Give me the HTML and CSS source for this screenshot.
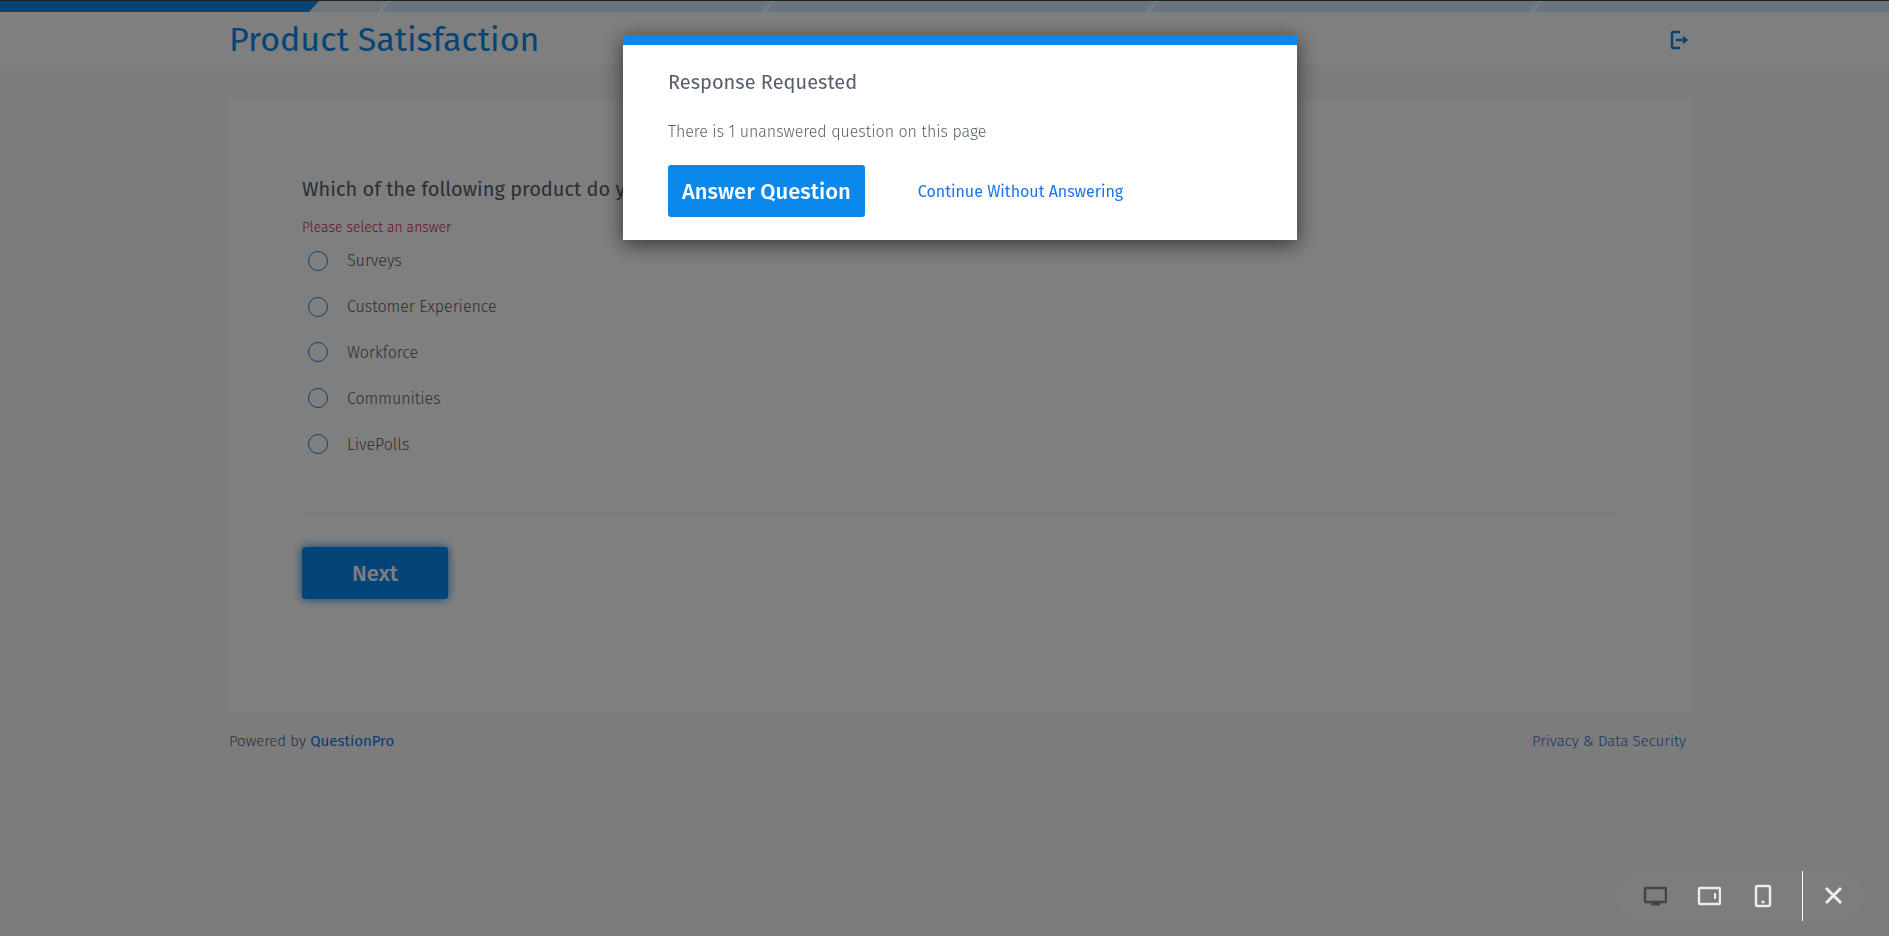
FILE: index.html
```
<!DOCTYPE html>
<html lang="en">
<head>
    <meta charset="UTF-8">
    <meta name="viewport" content="width=device-width, initial-scale=1.0">
    <title>Product Satisfaction</title>
    <link rel="stylesheet" href="styles.css">
</head>
<body>
    <div class="progress">
        <span class="step step-current"><span class="step-fill" style="width: 82%"></span></span>
        <span class="step"></span>
        <span class="step"></span>
        <span class="step"></span>
        <span class="step"></span>
    </div>

    <header class="header">
        <div class="container header-inner">
            <h1>Product Satisfaction</h1>
            <button type="button" class="exit" aria-label="Exit survey">
                <svg width="20" height="20" viewBox="0 0 20 20" fill="none" stroke="currentColor" stroke-width="2.500">
                    <path d="M11 2H4.500Q3 2 3 3.500V16.500Q3 18 4.500 18H11"/>
                    <path d="M7 10H16"/>
                    <path d="M14 5.800L19 10L14 14.200Z" fill="currentColor" stroke="none"/>
                </svg>
            </button>
        </div>
    </header>

    <main class="container">
        <form class="card">
            <h2 id="question">Which of the following product do you use?</h2>
            <p class="error">Please select an answer</p>
            <div class="options" role="radiogroup" aria-labelledby="question">
                <label class="option"><input type="radio" name="product" value="surveys">Surveys</label>
                <label class="option"><input type="radio" name="product" value="cx">Customer Experience</label>
                <label class="option"><input type="radio" name="product" value="workforce">Workforce</label>
                <label class="option"><input type="radio" name="product" value="communities">Communities</label>
                <label class="option"><input type="radio" name="product" value="livepolls">LivePolls</label>
            </div>
            <div class="actions">
                <button type="submit" class="btn btn-next">Next</button>
            </div>
        </form>
        <footer class="footer">
            <span>Powered by <a class="brand" href="#">QuestionPro</a></span>
            <a class="privacy" href="#">Privacy &amp; Data Security</a>
        </footer>
    </main>

    <div class="overlay">
        <div class="modal" role="dialog" aria-labelledby="modalTitle">
            <h3 id="modalTitle">Response Requested</h3>
            <p>There is 1 unanswered question on this page</p>
            <div class="modal-actions">
                <button type="button" class="btn">Answer Question</button>
                <a href="#">Continue Without Answering</a>
            </div>
        </div>
    </div>

    <div class="preview-bar">
        <div class="devices">
            <button type="button" class="active" aria-label="Desktop">
                <svg width="24" height="24" viewBox="0 0 24 24" fill="none" stroke="currentColor" stroke-width="2.500">
                    <rect x="2" y="4" width="21" height="14" rx="1"/>
                    <path d="M8 20H17" stroke-width="3"/>
                </svg>
            </button>
            <button type="button" aria-label="Tablet">
                <svg width="24" height="24" viewBox="0 0 24 24" fill="none" stroke="currentColor" stroke-width="2.500">
                    <rect x="2" y="4" width="21" height="16" rx="1"/>
                    <path d="M18 9V15" stroke-width="2"/>
                </svg>
            </button>
            <button type="button" aria-label="Phone">
                <svg width="24" height="24" viewBox="0 0 24 24" fill="none" stroke="currentColor" stroke-width="2.500">
                    <rect x="5" y="2" width="14" height="20" rx="1.500"/>
                    <path d="M10.500 18H13.500" stroke-width="2.500"/>
                </svg>
            </button>
        </div>
        <button type="button" class="close" aria-label="Close preview">
            <svg width="24" height="24" viewBox="0 0 24 24" fill="none" stroke="currentColor" stroke-width="3">
                <path d="M4 4L19 19M19 4L4 19"/>
            </svg>
        </button>
    </div>
</body>
</html>
```
FILE: styles.css
```
* {
    box-sizing: border-box;
}

body {
    margin: 0;
    min-height: 100vh;
    font-family: "Fira Sans", "Noto Sans", sans-serif;
    font-size: 16px;
    font-weight: 300;
    color: #545e6b;
    background-color: #f8f8f8;
    overflow-x: hidden;
}

h1, h2, h3, p {
    margin: 0;
}

a {
    color: #1b75e8;
    text-decoration: none;
}

button {
    font-family: inherit;
    border: none;
    padding: 0;
    background: none;
    cursor: pointer;
}

svg {
    display: block;
}

.container {
    margin: 0 198px 0 229px;
}

/* Progress */
.progress {
    display: flex;
    height: 12px;
    border-top: 1px solid #444;
    background-color: #fff;
    overflow: hidden;
}

.step {
    flex: 0 0 384px;
    border-right: 3px solid #fff;
    background-color: #d2e9fa;
    transform: skewX(-42deg);
}

.step-current {
    flex-basis: 386px;
    background-color: #dfeffb;
}

.step-fill {
    display: block;
    height: 100%;
    background-color: #0a88ec;
    box-shadow: -20px 0 #0a88ec;
}

/* Header */
.header {
    background-color: #fff;
}

.header-inner {
    display: flex;
    align-items: center;
    justify-content: space-between;
    height: 54px;
}

h1 {
    padding-top: 2px;
    font-size: 34px;
    font-weight: 400;
    line-height: 40px;
    color: #0a88ec;
}

.exit {
    padding: 2px 2px 0;
    color: #0a88ec;
}

/* Question */
.card {
    margin-top: 34px;
    height: 613px;
    padding: 76px 73px 0;
    background-color: #fff;
}

h2 {
    font-size: 20px;
    font-weight: 400;
    line-height: 26px;
    color: #545e6b;
}

.error {
    margin-top: 15px;
    font-size: 14px;
    line-height: 21px;
    color: #d0214f;
}

.options {
    display: grid;
    grid-auto-rows: 1fr;
    height: 229px;
}

.option {
    display: flex;
    align-items: center;
    gap: 19px;
    padding-left: 6px;
}

.option input {
    appearance: none;
    width: 20px;
    height: 20px;
    margin: 0;
    border: 1px solid #0a88ec;
    border-radius: 50%;
}

.actions {
    margin-top: 46px;
    padding-top: 33px;
    border-top: 1px solid #eee;
}

.btn {
    height: 52px;
    padding: 0 14px;
    border-radius: 3px;
    font-size: 22px;
    font-weight: 500;
    color: #fff;
    background-color: #0a88ec;
}

.btn-next {
    width: 146px;
    box-shadow: 0 0 10px #0a88ec;
}

.footer {
    display: flex;
    justify-content: space-between;
    padding: 17px 5px 0 0;
    font-size: 15px;
    line-height: 22px;
}

.brand {
    font-weight: 400;
}

.privacy {
    color: #3a6cc8;
}

/* Dialog */
.overlay {
    position: fixed;
    inset: 0;
    display: flex;
    justify-content: center;
    align-items: flex-start;
    padding: 35px 0 0 31px;
    background-color: rgba(0, 0, 0, 0.5);
}

.modal {
    width: 674px;
    padding: 24px 45px 23px;
    border-top: 10px solid #0a88ec;
    background-color: #fff;
    box-shadow: 0 4px 20px rgba(0, 0, 0, 0.6);
}

.modal h3 {
    font-size: 20px;
    font-weight: 400;
    line-height: 26px;
}

.modal p {
    margin: 25px 0 21px;
    line-height: 24px;
}

.modal-actions {
    display: flex;
    align-items: center;
    gap: 53px;
}

.modal-actions a {
    font-weight: 400;
}

/* Device preview */
.preview-bar {
    position: fixed;
    right: 26px;
    bottom: 15px;
    display: flex;
    height: 50px;
    border-radius: 25px;
    color: #ececec;
    background-color: #7d7d7d;
}

.devices {
    display: flex;
    gap: 30px;
    padding: 0 27px 0 26px;
    border-right: 1px solid #fff;
}

.devices button, .close {
    color: inherit;
}

.devices button.active {
    color: #444;
}

.close {
    padding: 0 17px 0 19px;
}
```
